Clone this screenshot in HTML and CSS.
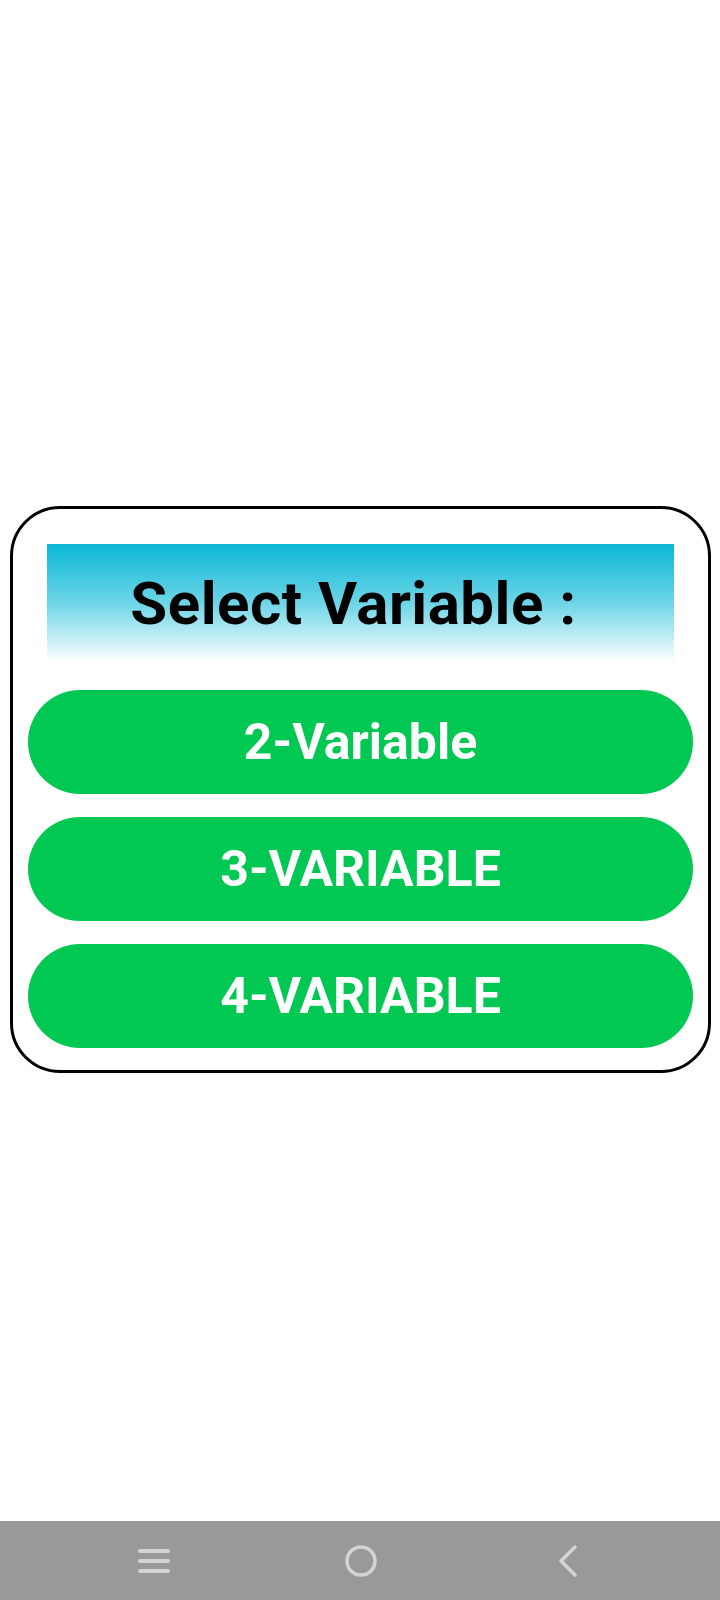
FILE: index.html
```html
<!DOCTYPE html>
<html lang="en">
  <head>
    <meta charset="utf-8" />
    <meta name="viewport" content="width=device-width, initial-scale=1" />
    <title>Select Variable</title>
    <link rel="stylesheet" href="styles.css">
  </head>
  <body>
    <div class="screen">
      <main class="main">
        <div class="card">
          <div class="card-header">
            <h1 class="title">Select Variable :</h1>
          </div>
          <div class="buttons">
            <button class="btn">2-Variable</button>
            <button class="btn">3-VARIABLE</button>
            <button class="btn">4-VARIABLE</button>
          </div>
        </div>
      </main>

      <nav class="navbar">
        <span class="nav-slot">
          <svg width="34" height="28" viewBox="0 0 34 28">
            <g stroke="#d4d4d4" stroke-width="4" stroke-linecap="round">
              <line x1="3" y1="4" x2="31" y2="4" />
              <line x1="3" y1="14" x2="31" y2="14" />
              <line x1="3" y1="24" x2="31" y2="24" />
            </g>
          </svg>
        </span>
        <span class="nav-slot">
          <svg width="34" height="34" viewBox="0 0 34 34">
            <circle cx="17" cy="17" r="14" fill="none" stroke="#d4d4d4" stroke-width="3.5" />
          </svg>
        </span>
        <span class="nav-slot">
          <svg width="24" height="34" viewBox="0 0 24 34">
            <polyline points="19,3 5,17 19,31" fill="none" stroke="#d4d4d4" stroke-width="3.5"
              stroke-linecap="round" stroke-linejoin="round" />
          </svg>
        </span>
      </nav>
    </div>
  </body>
</html>
```

FILE: styles.css
```css
*,
*::before,
*::after {
  box-sizing: border-box;
  margin: 0;
}

body {
  background: #fff;
  font-family: Roboto, "Noto Sans", sans-serif;
  margin: 0;
}

.screen {
  display: flex;
  flex-direction: column;
  height: 1600px;
}

.main {
  flex: 1;
  padding: 506px 9px 0 10px;
}

.card {
  border: 3px solid #000;
  border-radius: 50px;
  padding: 35px 15px 22px;
}

.card-header {
  align-items: center;
  background: linear-gradient(to bottom, #0bb8d6 0%, #6dd5e7 50%, #ffffff 100%);
  display: flex;
  height: 118px;
  justify-content: center;
  margin: 0 19px;
}

.title {
  color: #000;
  font-size: 60px;
  font-weight: 700;
  letter-spacing: 0.5px;
  padding-right: 14px;
}

.buttons {
  display: flex;
  flex-direction: column;
  gap: 23px;
  margin-top: 28px;
}

.btn {
  background: #00c853;
  border: 0;
  border-radius: 52px;
  color: #fff;
  font-family: inherit;
  font-size: 50px;
  font-weight: 700;
  height: 104px;
  padding: 0;
  width: 100%;
}

.navbar {
  align-items: center;
  background: #999998;
  display: flex;
  gap: 147px;
  height: 79px;
  padding-left: 124px;
}

.nav-slot {
  align-items: center;
  display: flex;
  justify-content: center;
  width: 60px;
}
```
